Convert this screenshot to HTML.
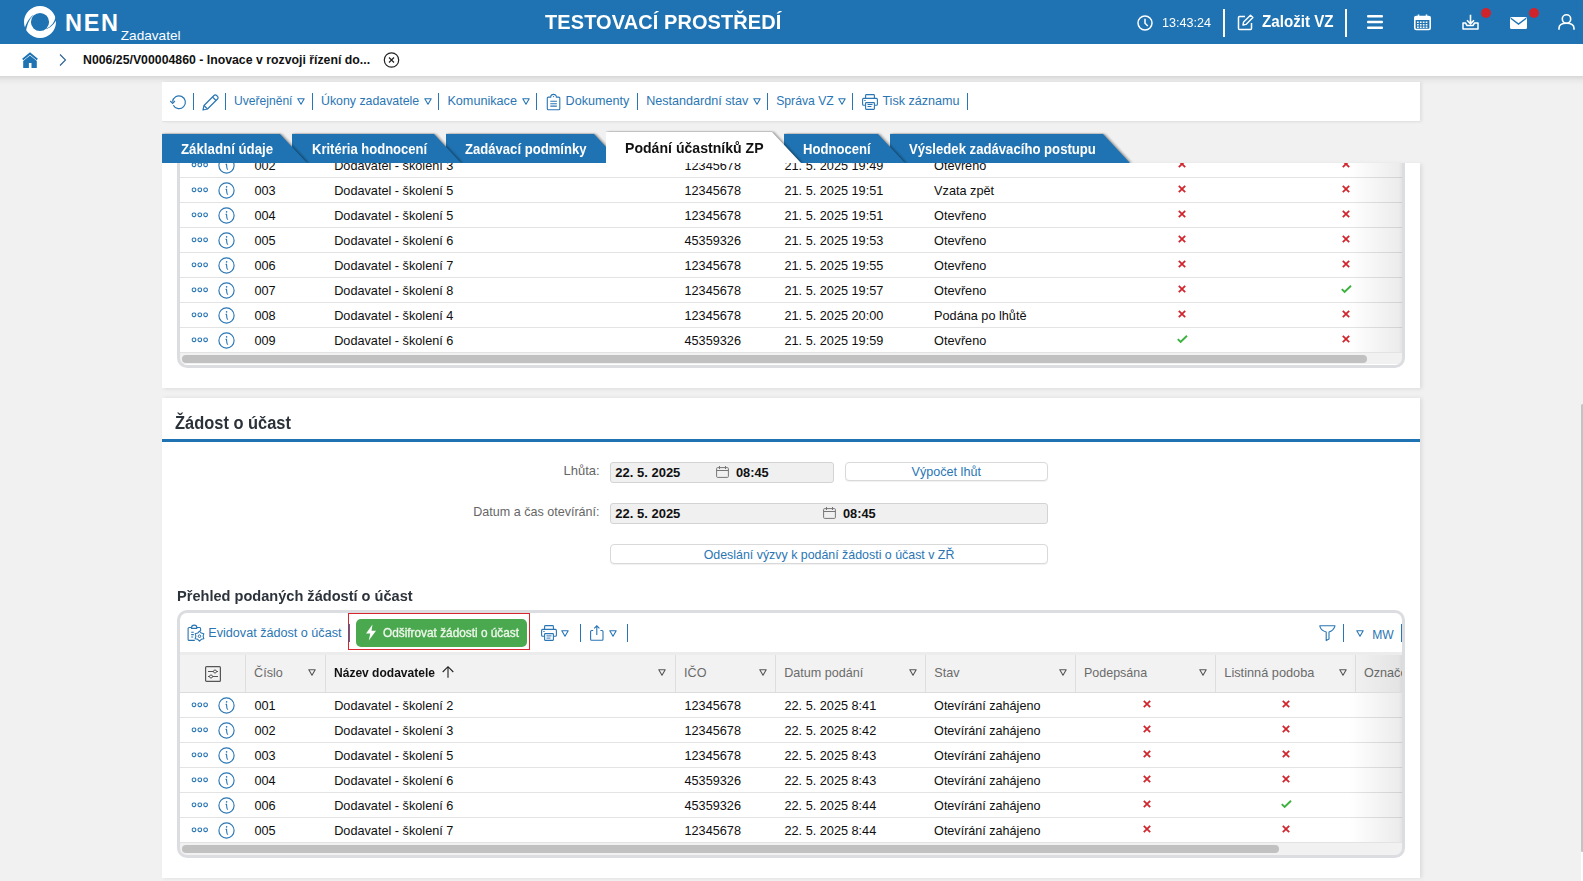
<!DOCTYPE html>
<html><head><meta charset="utf-8"><title>NEN</title><style>*{box-sizing:border-box}
html,body{margin:0;padding:0}
body{width:1583px;height:881px;overflow:hidden;background:#f1f1f1;position:relative;font-family:"Liberation Sans",sans-serif;color:#222}
.a{position:absolute}
.t{position:absolute;white-space:nowrap;line-height:1}
svg{position:absolute;overflow:visible}
#hdr{left:0;top:0;width:1583px;height:44px;background:#1f73b2}
#bc{left:0;top:44px;width:1583px;height:32px;background:#fff}
.panel{background:#fff;box-shadow:1px 1px 3px rgba(0,0,0,.10)}
.lnk{color:#2a76b4}
.sep{position:absolute;width:1px;background:#2a76b4}
.tab{position:absolute;top:134px;height:29px;background:#1f73b2}
.tabt{color:#fff;font-weight:bold}
.rl{position:absolute;height:1px;background:#e1e1e1}
.cell{position:absolute;white-space:nowrap;line-height:1;font-size:12.7px;color:#1a1a1a}
</style></head><body>
<div id="hdr" class="a"></div>
<svg style="left:23px;top:5px" width="34" height="34" viewBox="0 0 34 34"><circle cx="17" cy="17" r="12.55" fill="none" stroke="#fff" stroke-width="6.9"/><path d="M3.16 25.06 C4.62 18.80 6.68 13.41 10.34 10.61 L10.06 10.19 C6.12 12.59 3.18 18.40 1.24 24.54Z" fill="#1f73b2"/><path d="M32.62 11.39 C31.67 17.04 28.21 21.34 23.11 23.67 L23.29 24.13 C28.59 22.26 33.13 17.36 34.58 11.81Z" fill="#1f73b2"/></svg>
<div class="t" style="left:65.00px;top:11.61px;font-size:23.5px;font-weight:bold;color:#fff;letter-spacing:1.7px">NEN</div>
<div class="t" style="left:120.80px;top:28.79px;font-size:13.6px;color:#fff">Zadavatel</div>
<div class="t" style="left:545.00px;top:11.86px;font-size:20.6px;font-weight:bold;color:#fff;letter-spacing:0.1px;transform:scaleX(0.97);transform-origin:0 0">TESTOVACÍ PROSTŘEDÍ</div>
<svg style="left:1137px;top:15px" width="16" height="16" viewBox="0 0 16 16"><circle cx="8" cy="8" r="7" fill="none" stroke="#fff" stroke-width="1.5"/><path d="M8 3.8V8.3L10.8 11" fill="none" stroke="#fff" stroke-width="1.5"/></svg>
<div class="t" style="left:1162.00px;top:16.06px;font-size:13.4px;color:#fff;transform:scaleX(0.94);transform-origin:0 0">13:43:24</div>
<div class="a" style="left:1223px;top:9px;width:2px;height:28px;background:#fff"></div>
<svg style="left:1237px;top:14px" width="17" height="16" viewBox="0 0 17 16"><path d="M8 2.5H2.5a1 1 0 0 0-1 1V14.5a1 1 0 0 0 1 1H13.5a1 1 0 0 0 1-1V9" fill="none" stroke="#fff" stroke-width="1.5"/><path d="M6 11l.6-3L13.5 1.2l2.4 2.4L9 10.4z" fill="none" stroke="#fff" stroke-width="1.4" stroke-linejoin="round"/></svg>
<div class="t" style="left:1261.70px;top:13.12px;font-size:16.4px;font-weight:bold;color:#fff;transform:scaleX(0.925);transform-origin:0 0">Založit VZ</div>
<div class="a" style="left:1345px;top:9px;width:2px;height:28px;background:#fff"></div>
<svg style="left:1367px;top:15px" width="16" height="14" viewBox="0 0 16 14"><rect x="0" y="0" width="16" height="2.4" rx="1" fill="#fff"/><rect x="0" y="5.8" width="16" height="2.4" rx="1" fill="#fff"/><rect x="0" y="11.6" width="16" height="2.4" rx="1" fill="#fff"/></svg>
<svg style="left:1414px;top:14px" width="17" height="16" viewBox="0 0 17 16"><rect x="0.8" y="2.5" width="15.4" height="13" rx="1.5" fill="none" stroke="#fff" stroke-width="1.6"/><rect x="0.8" y="2.5" width="15.4" height="3.5" fill="#fff"/><path d="M4.5 0.5v3M12.5 0.5v3" stroke="#fff" stroke-width="1.6"/><rect x="3.0" y="7.5" width="1.7" height="1.5" fill="#fff"/><rect x="5.9" y="7.5" width="1.7" height="1.5" fill="#fff"/><rect x="8.8" y="7.5" width="1.7" height="1.5" fill="#fff"/><rect x="11.7" y="7.5" width="1.7" height="1.5" fill="#fff"/><rect x="3.0" y="10.0" width="1.7" height="1.5" fill="#fff"/><rect x="5.9" y="10.0" width="1.7" height="1.5" fill="#fff"/><rect x="8.8" y="10.0" width="1.7" height="1.5" fill="#fff"/><rect x="11.7" y="10.0" width="1.7" height="1.5" fill="#fff"/><rect x="3.0" y="12.5" width="1.7" height="1.5" fill="#fff"/><rect x="5.9" y="12.5" width="1.7" height="1.5" fill="#fff"/><rect x="8.8" y="12.5" width="1.7" height="1.5" fill="#fff"/><rect x="11.7" y="12.5" width="1.7" height="1.5" fill="#fff"/></svg>
<svg style="left:1462px;top:14px" width="17" height="16" viewBox="0 0 17 16"><path d="M8.5 0.8V9.5M5 6.3l3.5 3.5 3.5-3.5" fill="none" stroke="#fff" stroke-width="1.6"/><path d="M1 9v6h15V9h-3.5l-1.5 2.5H5L3.5 9z" fill="none" stroke="#fff" stroke-width="1.5" stroke-linejoin="round"/></svg>
<div class="a" style="left:1481px;top:8px;width:10px;height:10px;background:#d0242c;border-radius:50%"></div>
<svg style="left:1510px;top:17px" width="17" height="12" viewBox="0 0 17 12"><rect x="0" y="0" width="17" height="12" rx="1.5" fill="#fff"/><path d="M0.8 1.2L8.5 7 16.2 1.2" fill="none" stroke="#1f73b2" stroke-width="1.4"/></svg>
<div class="a" style="left:1529px;top:8px;width:10px;height:10px;background:#d0242c;border-radius:50%"></div>
<svg style="left:1558px;top:14px" width="17" height="16" viewBox="0 0 17 16"><circle cx="8.5" cy="5" r="4.2" fill="none" stroke="#fff" stroke-width="1.6"/><path d="M1 15.8v-1.5c0-3 2.5-5 7.5-5s7.5 2 7.5 5v1.5" fill="none" stroke="#fff" stroke-width="1.6"/></svg>
<div id="bc" class="a"></div>
<div class="a" style="left:0px;top:76px;width:1583px;height:9px;background:linear-gradient(rgba(0,0,0,.105),rgba(0,0,0,.03) 50%,rgba(0,0,0,0))"></div>
<svg style="left:22px;top:52px" width="16" height="16" viewBox="0 0 16 16"><path d="M0.7 7.4L8 1.4 15.3 7.4" fill="none" stroke="#1f73b2" stroke-width="1.9"/><path d="M1.2 9L8 3.5 14.8 9V15.9H9.5V11H6.9V15.9H1.2z" fill="#1f73b2"/></svg>
<svg style="left:59px;top:54px" width="8" height="12" viewBox="0 0 8 12"><path d="M1 0.5L6.5 6 1 11.5" fill="none" stroke="#2a5f8f" stroke-width="1.1"/></svg>
<div class="t" style="left:83.00px;top:53.99px;font-size:12.3px;font-weight:bold;color:#111">N006/25/V00004860 - Inovace v rozvoji řízení do...</div>
<svg style="left:383px;top:52px" width="17" height="17" viewBox="0 0 17 17"><circle cx="8.5" cy="8" r="7.2" fill="none" stroke="#222" stroke-width="1.2"/><path d="M6 5.5l5 5M11 5.5l-5 5" stroke="#222" stroke-width="1.2"/></svg>
<div class="a" style="left:162px;top:82px;width:1258px;height:40px;background:#fff;border-bottom:1px solid #e2e2e2;box-shadow:2px 0 3px rgba(0,0,0,.07)"></div>
<svg style="left:170px;top:94px" width="17" height="17" viewBox="0 0 17 17"><path d="M2.6 7.8A6.4 6.4 0 1 1 3.3 11.2" fill="none" stroke="#2a76b4" stroke-width="1.2"/><path d="M0.3 7.0L2.6 9.4 4.9 7.0" fill="none" stroke="#2a76b4" stroke-width="1.2"/></svg>
<div class="a" style="left:193px;top:93px;width:1px;height:17px;background:#2a76b4"></div>
<svg style="left:202px;top:94px" width="17" height="17" viewBox="0 0 17 17"><path d="M1 16l1-4.5L12 1.5a1.8 1.8 0 0 1 2.6 0l.9.9a1.8 1.8 0 0 1 0 2.6L5.5 15z" fill="none" stroke="#2a76b4" stroke-width="1.2" stroke-linejoin="round"/><path d="M2 11.5l3.5 3.5M10.5 3l3.5 3.5" stroke="#2a76b4" stroke-width="1.1"/></svg>
<div class="a" style="left:225px;top:93px;width:1px;height:17px;background:#2a76b4"></div>
<div class="t" style="left:234.00px;top:94.96px;font-size:12.1px;color:#2a76b4">Uveřejnění</div>
<svg style="left:297px;top:98px" width="8" height="7" viewBox="0 0 8 7"><path d="M0.8 0.8H7.2L4 6.2z" fill="none" stroke="#2a76b4" stroke-width="1.1" stroke-linejoin="round"/></svg>
<div class="a" style="left:312px;top:93px;width:1px;height:17px;background:#2a76b4"></div>
<div class="t" style="left:321.00px;top:94.75px;font-size:12.35px;color:#2a76b4">Úkony zadavatele</div>
<svg style="left:424px;top:98px" width="8" height="7" viewBox="0 0 8 7"><path d="M0.8 0.8H7.2L4 6.2z" fill="none" stroke="#2a76b4" stroke-width="1.1" stroke-linejoin="round"/></svg>
<div class="a" style="left:438px;top:93px;width:1px;height:17px;background:#2a76b4"></div>
<div class="t" style="left:447.40px;top:94.99px;font-size:12.65px;color:#2a76b4">Komunikace</div>
<svg style="left:522px;top:98px" width="8" height="7" viewBox="0 0 8 7"><path d="M0.8 0.8H7.2L4 6.2z" fill="none" stroke="#2a76b4" stroke-width="1.1" stroke-linejoin="round"/></svg>
<div class="a" style="left:536px;top:93px;width:1px;height:17px;background:#2a76b4"></div>
<svg style="left:546px;top:94px" width="15" height="16" viewBox="0 0 15 16"><path d="M4.8 3.1H2.3a1 1 0 0 0-1 1V14.7a1 1 0 0 0 1 1H12.8a1 1 0 0 0 1-1V4.1a1 1 0 0 0-1-1H10.3" fill="none" stroke="#2a76b4" stroke-width="1.1"/><path d="M4.8 3.6V2.6a2.75 2.2 0 0 1 5.5 0V3.6" fill="none" stroke="#2a76b4" stroke-width="1.1"/><circle cx="7.55" cy="2.6" r=".6" fill="#2a76b4"/><path d="M4.3 7.3h6.6M4.3 9.7h6.6M4.3 12.1h6.6" stroke="#2a76b4" stroke-width="1.05"/></svg>
<div class="t" style="left:565.60px;top:94.53px;font-size:12.6px;color:#2a76b4">Dokumenty</div>
<div class="a" style="left:637px;top:93px;width:1px;height:17px;background:#2a76b4"></div>
<div class="t" style="left:646.20px;top:94.53px;font-size:12.6px;color:#2a76b4">Nestandardní stav</div>
<svg style="left:753px;top:98px" width="8" height="7" viewBox="0 0 8 7"><path d="M0.8 0.8H7.2L4 6.2z" fill="none" stroke="#2a76b4" stroke-width="1.1" stroke-linejoin="round"/></svg>
<div class="a" style="left:767px;top:93px;width:1px;height:17px;background:#2a76b4"></div>
<div class="t" style="left:776.20px;top:94.87px;font-size:12.2px;color:#2a76b4">Správa VZ</div>
<svg style="left:838px;top:98px" width="8" height="7" viewBox="0 0 8 7"><path d="M0.8 0.8H7.2L4 6.2z" fill="none" stroke="#2a76b4" stroke-width="1.1" stroke-linejoin="round"/></svg>
<div class="a" style="left:852px;top:93px;width:1px;height:17px;background:#2a76b4"></div>
<svg style="left:861.6px;top:94px" width="16" height="16" viewBox="0 0 16 16"><path d="M3.6 4.4V1.4a.8.8 0 0 1 .8-.8h7.2a.8.8 0 0 1 .8.8v3" fill="none" stroke="#2a76b4" stroke-width="1.1"/><path d="M3.4 11.2H1.6a1 1 0 0 1-1-1V5.4a1 1 0 0 1 1-1h12.8a1 1 0 0 1 1 1v4.8a1 1 0 0 1-1 1h-1.8" fill="none" stroke="#2a76b4" stroke-width="1.1"/><rect x="3.6" y="8.6" width="8.8" height="6.8" rx=".6" fill="none" stroke="#2a76b4" stroke-width="1.1"/><path d="M5.5 10.5h5M5.5 12.5h4M2.3 6.5h1.3" stroke="#2a76b4" stroke-width="1"/></svg>
<div class="t" style="left:882.40px;top:94.53px;font-size:12.6px;color:#2a76b4">Tisk záznamu</div>
<div class="a" style="left:967px;top:93px;width:1px;height:17px;background:#2a76b4"></div>
<div class="a" style="left:162px;top:163px;width:1258px;height:225px;background:#fff;box-shadow:2px 1px 4px rgba(0,0,0,.09)"></div>
<div class="a" style="left:0;top:0;width:1583px;height:881px;clip-path:inset(163px 0 0 0)">
<svg style="left:191px;top:162px" width="18" height="6" viewBox="0 0 18 6"><rect x="1.2" y="1.0" width="3.6" height="3.6" rx="1.5" fill="none" stroke="#2a76b4" stroke-width="1.1"/><rect x="7.0" y="1.0" width="3.6" height="3.6" rx="1.5" fill="none" stroke="#2a76b4" stroke-width="1.1"/><rect x="12.8" y="1.0" width="3.6" height="3.6" rx="1.5" fill="none" stroke="#2a76b4" stroke-width="1.1"/></svg>
<svg style="left:217.5px;top:156.7px" width="17" height="17" viewBox="0 0 17 17"><circle cx="8.5" cy="8.5" r="7.6" fill="none" stroke="#2a76b4" stroke-width="1.15"/><circle cx="8.6" cy="4.9" r="0.8" fill="#2a76b4"/><path d="M7.6 7.4h.9l.4 3.6c.1 .9 .5 1.3 1.2 1.5" fill="none" stroke="#2a76b4" stroke-width="1.1"/></svg>
<div class="t" style="left:254.50px;top:160.05px;font-size:12.7px;color:#0e0e0e">002</div>
<div class="t" style="left:334.20px;top:160.05px;font-size:12.7px;color:#0e0e0e">Dodavatel - školení 3</div>
<div class="t" style="left:684.50px;top:160.05px;font-size:12.7px;color:#0e0e0e">12345678</div>
<div class="t" style="left:784.50px;top:160.05px;font-size:12.7px;color:#0e0e0e">21. 5. 2025 19:49</div>
<div class="t" style="left:934.10px;top:160.05px;font-size:12.7px;color:#0e0e0e">Otevřeno</div>
<svg style="left:1177.5px;top:159.5px" width="8" height="8" viewBox="0 0 8 8"><path d="M0.8 0.8L7.2 7.2M7.2 0.8L0.8 7.2" stroke="#d0262d" stroke-width="1.8"/></svg>
<svg style="left:1342.3px;top:159.5px" width="8" height="8" viewBox="0 0 8 8"><path d="M0.8 0.8L7.2 7.2M7.2 0.8L0.8 7.2" stroke="#d0262d" stroke-width="1.8"/></svg>
<div class="a" style="left:180px;top:177px;width:1222px;height:1px;background:#e3e3e3"></div>
<svg style="left:191px;top:187px" width="18" height="6" viewBox="0 0 18 6"><rect x="1.2" y="1.0" width="3.6" height="3.6" rx="1.5" fill="none" stroke="#2a76b4" stroke-width="1.1"/><rect x="7.0" y="1.0" width="3.6" height="3.6" rx="1.5" fill="none" stroke="#2a76b4" stroke-width="1.1"/><rect x="12.8" y="1.0" width="3.6" height="3.6" rx="1.5" fill="none" stroke="#2a76b4" stroke-width="1.1"/></svg>
<svg style="left:217.5px;top:181.7px" width="17" height="17" viewBox="0 0 17 17"><circle cx="8.5" cy="8.5" r="7.6" fill="none" stroke="#2a76b4" stroke-width="1.15"/><circle cx="8.6" cy="4.9" r="0.8" fill="#2a76b4"/><path d="M7.6 7.4h.9l.4 3.6c.1 .9 .5 1.3 1.2 1.5" fill="none" stroke="#2a76b4" stroke-width="1.1"/></svg>
<div class="t" style="left:254.50px;top:185.05px;font-size:12.7px;color:#0e0e0e">003</div>
<div class="t" style="left:334.20px;top:185.05px;font-size:12.7px;color:#0e0e0e">Dodavatel - školení 5</div>
<div class="t" style="left:684.50px;top:185.05px;font-size:12.7px;color:#0e0e0e">12345678</div>
<div class="t" style="left:784.50px;top:185.05px;font-size:12.7px;color:#0e0e0e">21. 5. 2025 19:51</div>
<div class="t" style="left:934.10px;top:185.05px;font-size:12.7px;color:#0e0e0e">Vzata zpět</div>
<svg style="left:1177.5px;top:184.5px" width="8" height="8" viewBox="0 0 8 8"><path d="M0.8 0.8L7.2 7.2M7.2 0.8L0.8 7.2" stroke="#d0262d" stroke-width="1.8"/></svg>
<svg style="left:1342.3px;top:184.5px" width="8" height="8" viewBox="0 0 8 8"><path d="M0.8 0.8L7.2 7.2M7.2 0.8L0.8 7.2" stroke="#d0262d" stroke-width="1.8"/></svg>
<div class="a" style="left:180px;top:202px;width:1222px;height:1px;background:#e3e3e3"></div>
<svg style="left:191px;top:212px" width="18" height="6" viewBox="0 0 18 6"><rect x="1.2" y="1.0" width="3.6" height="3.6" rx="1.5" fill="none" stroke="#2a76b4" stroke-width="1.1"/><rect x="7.0" y="1.0" width="3.6" height="3.6" rx="1.5" fill="none" stroke="#2a76b4" stroke-width="1.1"/><rect x="12.8" y="1.0" width="3.6" height="3.6" rx="1.5" fill="none" stroke="#2a76b4" stroke-width="1.1"/></svg>
<svg style="left:217.5px;top:206.7px" width="17" height="17" viewBox="0 0 17 17"><circle cx="8.5" cy="8.5" r="7.6" fill="none" stroke="#2a76b4" stroke-width="1.15"/><circle cx="8.6" cy="4.9" r="0.8" fill="#2a76b4"/><path d="M7.6 7.4h.9l.4 3.6c.1 .9 .5 1.3 1.2 1.5" fill="none" stroke="#2a76b4" stroke-width="1.1"/></svg>
<div class="t" style="left:254.50px;top:210.05px;font-size:12.7px;color:#0e0e0e">004</div>
<div class="t" style="left:334.20px;top:210.05px;font-size:12.7px;color:#0e0e0e">Dodavatel - školení 5</div>
<div class="t" style="left:684.50px;top:210.05px;font-size:12.7px;color:#0e0e0e">12345678</div>
<div class="t" style="left:784.50px;top:210.05px;font-size:12.7px;color:#0e0e0e">21. 5. 2025 19:51</div>
<div class="t" style="left:934.10px;top:210.05px;font-size:12.7px;color:#0e0e0e">Otevřeno</div>
<svg style="left:1177.5px;top:209.5px" width="8" height="8" viewBox="0 0 8 8"><path d="M0.8 0.8L7.2 7.2M7.2 0.8L0.8 7.2" stroke="#d0262d" stroke-width="1.8"/></svg>
<svg style="left:1342.3px;top:209.5px" width="8" height="8" viewBox="0 0 8 8"><path d="M0.8 0.8L7.2 7.2M7.2 0.8L0.8 7.2" stroke="#d0262d" stroke-width="1.8"/></svg>
<div class="a" style="left:180px;top:227px;width:1222px;height:1px;background:#e3e3e3"></div>
<svg style="left:191px;top:237px" width="18" height="6" viewBox="0 0 18 6"><rect x="1.2" y="1.0" width="3.6" height="3.6" rx="1.5" fill="none" stroke="#2a76b4" stroke-width="1.1"/><rect x="7.0" y="1.0" width="3.6" height="3.6" rx="1.5" fill="none" stroke="#2a76b4" stroke-width="1.1"/><rect x="12.8" y="1.0" width="3.6" height="3.6" rx="1.5" fill="none" stroke="#2a76b4" stroke-width="1.1"/></svg>
<svg style="left:217.5px;top:231.7px" width="17" height="17" viewBox="0 0 17 17"><circle cx="8.5" cy="8.5" r="7.6" fill="none" stroke="#2a76b4" stroke-width="1.15"/><circle cx="8.6" cy="4.9" r="0.8" fill="#2a76b4"/><path d="M7.6 7.4h.9l.4 3.6c.1 .9 .5 1.3 1.2 1.5" fill="none" stroke="#2a76b4" stroke-width="1.1"/></svg>
<div class="t" style="left:254.50px;top:235.05px;font-size:12.7px;color:#0e0e0e">005</div>
<div class="t" style="left:334.20px;top:235.05px;font-size:12.7px;color:#0e0e0e">Dodavatel - školení 6</div>
<div class="t" style="left:684.50px;top:235.05px;font-size:12.7px;color:#0e0e0e">45359326</div>
<div class="t" style="left:784.50px;top:235.05px;font-size:12.7px;color:#0e0e0e">21. 5. 2025 19:53</div>
<div class="t" style="left:934.10px;top:235.05px;font-size:12.7px;color:#0e0e0e">Otevřeno</div>
<svg style="left:1177.5px;top:234.5px" width="8" height="8" viewBox="0 0 8 8"><path d="M0.8 0.8L7.2 7.2M7.2 0.8L0.8 7.2" stroke="#d0262d" stroke-width="1.8"/></svg>
<svg style="left:1342.3px;top:234.5px" width="8" height="8" viewBox="0 0 8 8"><path d="M0.8 0.8L7.2 7.2M7.2 0.8L0.8 7.2" stroke="#d0262d" stroke-width="1.8"/></svg>
<div class="a" style="left:180px;top:252px;width:1222px;height:1px;background:#e3e3e3"></div>
<svg style="left:191px;top:262px" width="18" height="6" viewBox="0 0 18 6"><rect x="1.2" y="1.0" width="3.6" height="3.6" rx="1.5" fill="none" stroke="#2a76b4" stroke-width="1.1"/><rect x="7.0" y="1.0" width="3.6" height="3.6" rx="1.5" fill="none" stroke="#2a76b4" stroke-width="1.1"/><rect x="12.8" y="1.0" width="3.6" height="3.6" rx="1.5" fill="none" stroke="#2a76b4" stroke-width="1.1"/></svg>
<svg style="left:217.5px;top:256.7px" width="17" height="17" viewBox="0 0 17 17"><circle cx="8.5" cy="8.5" r="7.6" fill="none" stroke="#2a76b4" stroke-width="1.15"/><circle cx="8.6" cy="4.9" r="0.8" fill="#2a76b4"/><path d="M7.6 7.4h.9l.4 3.6c.1 .9 .5 1.3 1.2 1.5" fill="none" stroke="#2a76b4" stroke-width="1.1"/></svg>
<div class="t" style="left:254.50px;top:260.05px;font-size:12.7px;color:#0e0e0e">006</div>
<div class="t" style="left:334.20px;top:260.05px;font-size:12.7px;color:#0e0e0e">Dodavatel - školení 7</div>
<div class="t" style="left:684.50px;top:260.05px;font-size:12.7px;color:#0e0e0e">12345678</div>
<div class="t" style="left:784.50px;top:260.05px;font-size:12.7px;color:#0e0e0e">21. 5. 2025 19:55</div>
<div class="t" style="left:934.10px;top:260.05px;font-size:12.7px;color:#0e0e0e">Otevřeno</div>
<svg style="left:1177.5px;top:259.5px" width="8" height="8" viewBox="0 0 8 8"><path d="M0.8 0.8L7.2 7.2M7.2 0.8L0.8 7.2" stroke="#d0262d" stroke-width="1.8"/></svg>
<svg style="left:1342.3px;top:259.5px" width="8" height="8" viewBox="0 0 8 8"><path d="M0.8 0.8L7.2 7.2M7.2 0.8L0.8 7.2" stroke="#d0262d" stroke-width="1.8"/></svg>
<div class="a" style="left:180px;top:277px;width:1222px;height:1px;background:#e3e3e3"></div>
<svg style="left:191px;top:287px" width="18" height="6" viewBox="0 0 18 6"><rect x="1.2" y="1.0" width="3.6" height="3.6" rx="1.5" fill="none" stroke="#2a76b4" stroke-width="1.1"/><rect x="7.0" y="1.0" width="3.6" height="3.6" rx="1.5" fill="none" stroke="#2a76b4" stroke-width="1.1"/><rect x="12.8" y="1.0" width="3.6" height="3.6" rx="1.5" fill="none" stroke="#2a76b4" stroke-width="1.1"/></svg>
<svg style="left:217.5px;top:281.7px" width="17" height="17" viewBox="0 0 17 17"><circle cx="8.5" cy="8.5" r="7.6" fill="none" stroke="#2a76b4" stroke-width="1.15"/><circle cx="8.6" cy="4.9" r="0.8" fill="#2a76b4"/><path d="M7.6 7.4h.9l.4 3.6c.1 .9 .5 1.3 1.2 1.5" fill="none" stroke="#2a76b4" stroke-width="1.1"/></svg>
<div class="t" style="left:254.50px;top:285.05px;font-size:12.7px;color:#0e0e0e">007</div>
<div class="t" style="left:334.20px;top:285.05px;font-size:12.7px;color:#0e0e0e">Dodavatel - školení 8</div>
<div class="t" style="left:684.50px;top:285.05px;font-size:12.7px;color:#0e0e0e">12345678</div>
<div class="t" style="left:784.50px;top:285.05px;font-size:12.7px;color:#0e0e0e">21. 5. 2025 19:57</div>
<div class="t" style="left:934.10px;top:285.05px;font-size:12.7px;color:#0e0e0e">Otevřeno</div>
<svg style="left:1177.5px;top:284.5px" width="8" height="8" viewBox="0 0 8 8"><path d="M0.8 0.8L7.2 7.2M7.2 0.8L0.8 7.2" stroke="#d0262d" stroke-width="1.8"/></svg>
<svg style="left:1341.3px;top:285px" width="11" height="8" viewBox="0 0 11 8"><path d="M0.8 4.2L3.6 7 10 0.8" fill="none" stroke="#3bb23d" stroke-width="1.9"/></svg>
<div class="a" style="left:180px;top:302px;width:1222px;height:1px;background:#e3e3e3"></div>
<svg style="left:191px;top:312px" width="18" height="6" viewBox="0 0 18 6"><rect x="1.2" y="1.0" width="3.6" height="3.6" rx="1.5" fill="none" stroke="#2a76b4" stroke-width="1.1"/><rect x="7.0" y="1.0" width="3.6" height="3.6" rx="1.5" fill="none" stroke="#2a76b4" stroke-width="1.1"/><rect x="12.8" y="1.0" width="3.6" height="3.6" rx="1.5" fill="none" stroke="#2a76b4" stroke-width="1.1"/></svg>
<svg style="left:217.5px;top:306.7px" width="17" height="17" viewBox="0 0 17 17"><circle cx="8.5" cy="8.5" r="7.6" fill="none" stroke="#2a76b4" stroke-width="1.15"/><circle cx="8.6" cy="4.9" r="0.8" fill="#2a76b4"/><path d="M7.6 7.4h.9l.4 3.6c.1 .9 .5 1.3 1.2 1.5" fill="none" stroke="#2a76b4" stroke-width="1.1"/></svg>
<div class="t" style="left:254.50px;top:310.05px;font-size:12.7px;color:#0e0e0e">008</div>
<div class="t" style="left:334.20px;top:310.05px;font-size:12.7px;color:#0e0e0e">Dodavatel - školení 4</div>
<div class="t" style="left:684.50px;top:310.05px;font-size:12.7px;color:#0e0e0e">12345678</div>
<div class="t" style="left:784.50px;top:310.05px;font-size:12.7px;color:#0e0e0e">21. 5. 2025 20:00</div>
<div class="t" style="left:934.10px;top:310.05px;font-size:12.7px;color:#0e0e0e">Podána po lhůtě</div>
<svg style="left:1177.5px;top:309.5px" width="8" height="8" viewBox="0 0 8 8"><path d="M0.8 0.8L7.2 7.2M7.2 0.8L0.8 7.2" stroke="#d0262d" stroke-width="1.8"/></svg>
<svg style="left:1342.3px;top:309.5px" width="8" height="8" viewBox="0 0 8 8"><path d="M0.8 0.8L7.2 7.2M7.2 0.8L0.8 7.2" stroke="#d0262d" stroke-width="1.8"/></svg>
<div class="a" style="left:180px;top:327px;width:1222px;height:1px;background:#e3e3e3"></div>
<svg style="left:191px;top:337px" width="18" height="6" viewBox="0 0 18 6"><rect x="1.2" y="1.0" width="3.6" height="3.6" rx="1.5" fill="none" stroke="#2a76b4" stroke-width="1.1"/><rect x="7.0" y="1.0" width="3.6" height="3.6" rx="1.5" fill="none" stroke="#2a76b4" stroke-width="1.1"/><rect x="12.8" y="1.0" width="3.6" height="3.6" rx="1.5" fill="none" stroke="#2a76b4" stroke-width="1.1"/></svg>
<svg style="left:217.5px;top:331.7px" width="17" height="17" viewBox="0 0 17 17"><circle cx="8.5" cy="8.5" r="7.6" fill="none" stroke="#2a76b4" stroke-width="1.15"/><circle cx="8.6" cy="4.9" r="0.8" fill="#2a76b4"/><path d="M7.6 7.4h.9l.4 3.6c.1 .9 .5 1.3 1.2 1.5" fill="none" stroke="#2a76b4" stroke-width="1.1"/></svg>
<div class="t" style="left:254.50px;top:335.05px;font-size:12.7px;color:#0e0e0e">009</div>
<div class="t" style="left:334.20px;top:335.05px;font-size:12.7px;color:#0e0e0e">Dodavatel - školení 6</div>
<div class="t" style="left:684.50px;top:335.05px;font-size:12.7px;color:#0e0e0e">45359326</div>
<div class="t" style="left:784.50px;top:335.05px;font-size:12.7px;color:#0e0e0e">21. 5. 2025 19:59</div>
<div class="t" style="left:934.10px;top:335.05px;font-size:12.7px;color:#0e0e0e">Otevřeno</div>
<svg style="left:1176.5px;top:335px" width="11" height="8" viewBox="0 0 11 8"><path d="M0.8 4.2L3.6 7 10 0.8" fill="none" stroke="#3bb23d" stroke-width="1.9"/></svg>
<svg style="left:1342.3px;top:334.5px" width="8" height="8" viewBox="0 0 8 8"><path d="M0.8 0.8L7.2 7.2M7.2 0.8L0.8 7.2" stroke="#d0262d" stroke-width="1.8"/></svg>
<div class="a" style="left:180px;top:352px;width:1222px;height:1px;background:#e3e3e3"></div>
</div>
<div class="a" style="left:1349px;top:163px;width:53px;height:189px;background:linear-gradient(to right,rgba(0,0,0,0),rgba(0,0,0,.075) 94%,rgba(0,0,0,.11))"></div>
<div class="a" style="left:180px;top:353px;width:1222px;height:11px;background:#f1f1f1"></div>
<div class="a" style="left:182px;top:355px;width:1185px;height:8px;background:#c1c1c1;border-radius:4px"></div>
<div class="a" style="left:177px;top:163px;width:1228px;height:205px;border:3px solid #dcdde0;border-top:0;border-radius:0 0 10px 10px"></div>
<div class="a" style="left:446px;top:134px;width:181px;height:29px;filter:drop-shadow(2px 0px 1.2px rgba(0,0,0,.3)) drop-shadow(0 -1px 0.6px rgba(0,0,0,.10));clip-path:inset(-6px -10px 0 -6px)"><svg style="left:0;top:0" width="175" height="29"><polygon points="0,0 148,0 175,29 0,29" fill="#1f73b2"/></svg></div>
<div class="t" style="left:465.20px;top:142.02px;font-size:14.15px;font-weight:bold;color:#fff;transform:scaleX(0.9259);transform-origin:0 0">Zadávací podmínky</div>
<div class="a" style="left:292px;top:134px;width:175px;height:29px;filter:drop-shadow(2px 0px 1.2px rgba(0,0,0,.3)) drop-shadow(0 -1px 0.6px rgba(0,0,0,.10));clip-path:inset(-6px -10px 0 -6px)"><svg style="left:0;top:0" width="169" height="29"><polygon points="0,0 142,0 169,29 0,29" fill="#1f73b2"/></svg></div>
<div class="t" style="left:311.70px;top:142.07px;font-size:14.09px;font-weight:bold;color:#fff;transform:scaleX(0.9259);transform-origin:0 0">Kritéria hodnocení</div>
<div class="a" style="left:162px;top:134px;width:151px;height:29px;filter:drop-shadow(2px 0px 1.2px rgba(0,0,0,.3)) drop-shadow(0 -1px 0.6px rgba(0,0,0,.10));clip-path:inset(-6px -10px 0 -6px)"><svg style="left:0;top:0" width="145" height="29"><polygon points="0,0 118,0 145,29 0,29" fill="#1f73b2"/></svg></div>
<div class="t" style="left:181.00px;top:141.87px;font-size:14.33px;font-weight:bold;color:#fff;transform:scaleX(0.9259);transform-origin:0 0">Základní údaje</div>
<div class="a" style="left:890px;top:134px;width:246px;height:29px;filter:drop-shadow(2px 0px 1.2px rgba(0,0,0,.3)) drop-shadow(0 -1px 0.6px rgba(0,0,0,.10));clip-path:inset(-6px -10px 0 -6px)"><svg style="left:0;top:0" width="240" height="29"><polygon points="0,0 213,0 240,29 0,29" fill="#1f73b2"/></svg></div>
<div class="t" style="left:909.20px;top:141.99px;font-size:14.19px;font-weight:bold;color:#fff;transform:scaleX(0.9259);transform-origin:0 0">Výsledek zadávacího postupu</div>
<div class="a" style="left:784px;top:134px;width:127px;height:29px;filter:drop-shadow(2px 0px 1.2px rgba(0,0,0,.3)) drop-shadow(0 -1px 0.6px rgba(0,0,0,.10));clip-path:inset(-6px -10px 0 -6px)"><svg style="left:0;top:0" width="121" height="29"><polygon points="0,0 94,0 121,29 0,29" fill="#1f73b2"/></svg></div>
<div class="t" style="left:803.30px;top:142.02px;font-size:14.15px;font-weight:bold;color:#fff;transform:scaleX(0.9259);transform-origin:0 0">Hodnocení</div>
<div class="a" style="left:606px;top:132px;width:201px;height:31px;filter:drop-shadow(2px 0px 1.2px rgba(0,0,0,.3)) drop-shadow(0 -1px 0.6px rgba(0,0,0,.10));clip-path:inset(-6px -10px 0 -6px)"><svg style="left:0;top:0" width="195" height="31"><polygon points="0,0 166,0 195,31 0,31" fill="#fff"/></svg></div>
<div class="t" style="left:625.00px;top:140.31px;font-size:15.23px;font-weight:bold;color:#111;transform:scaleX(0.9259);transform-origin:0 0">Podání účastníků ZP</div>
<div class="a" style="left:162px;top:398px;width:1258px;height:480px;background:#fff;box-shadow:2px 0 4px rgba(0,0,0,.09)"></div>
<div class="t" style="left:174.50px;top:414.09px;font-size:18.8px;font-weight:bold;color:#2b3239;transform:scaleX(0.875);transform-origin:0 0">Žádost o účast</div>
<div class="a" style="left:162px;top:439px;width:1258px;height:3px;background:#1f73b2"></div>
<div class="t" style="left:563.50px;top:464.30px;font-size:13.0px;color:#666">Lhůta:</div>
<div class="t" style="left:473.30px;top:506.17px;font-size:12.56px;color:#666">Datum a čas otevírání:</div>
<div class="a" style="left:610px;top:462px;width:224px;height:21px;background:#f0f0f0;border:1px solid #d3d3d3;border-radius:3px"></div>
<div class="t" style="left:615.30px;top:466.10px;font-size:13.0px;font-weight:bold;color:#111">22. 5. 2025</div>
<svg style="left:716px;top:466px" width="13" height="12" viewBox="0 0 13 12"><rect x="0.6" y="1.6" width="11.8" height="9.8" rx="1" fill="none" stroke="#777" stroke-width="1"/><path d="M0.6 4.5h11.8M3.5 0v3M9.5 0v3" stroke="#777" stroke-width="1"/></svg>
<div class="t" style="left:736.00px;top:466.76px;font-size:12.8px;font-weight:bold;color:#111">08:45</div>
<div class="a" style="left:845px;top:462px;width:203px;height:19px;background:#fff;border:1px solid #d9d9d9;border-radius:4px;box-shadow:0 1px 1px rgba(0,0,0,.06)"></div>
<div class="t" style="left:911.60px;top:466.33px;font-size:12.6px;color:#2a76b4">Výpočet lhůt</div>
<div class="a" style="left:610px;top:503px;width:438px;height:21px;background:#f0f0f0;border:1px solid #d3d3d3;border-radius:3px"></div>
<div class="t" style="left:615.30px;top:507.10px;font-size:13.0px;font-weight:bold;color:#111">22. 5. 2025</div>
<svg style="left:823px;top:507px" width="13" height="12" viewBox="0 0 13 12"><rect x="0.6" y="1.6" width="11.8" height="9.8" rx="1" fill="none" stroke="#777" stroke-width="1"/><path d="M0.6 4.5h11.8M3.5 0v3M9.5 0v3" stroke="#777" stroke-width="1"/></svg>
<div class="t" style="left:843.00px;top:507.76px;font-size:12.8px;font-weight:bold;color:#111">08:45</div>
<div class="a" style="left:610px;top:544px;width:438px;height:20px;background:#fff;border:1px solid #d9d9d9;border-radius:4px;box-shadow:0 1px 1px rgba(0,0,0,.06)"></div>
<div class="t" style="left:703.70px;top:548.50px;font-size:12.4px;color:#2a76b4">Odeslání výzvy k podání žádosti o účast v ZŘ</div>
<div class="t" style="left:177.40px;top:588.08px;font-size:15.5px;font-weight:bold;color:#2c333b;transform:scaleX(0.94);transform-origin:0 0">Přehled podaných žádostí o účast</div>
<svg style="left:187px;top:624px" width="18" height="18" viewBox="0 0 18 18"><path d="M7.8 16.4H2.1a1 1 0 0 1-1-1V4.5a1 1 0 0 1 1-1H4.8M9.6 3.5h3a1 1 0 0 1 1 1V7" fill="none" stroke="#2a76b4" stroke-width="1.1"/><path d="M4.6 4.4V3.4a2.6 2.3 0 0 1 5.2 0V4.4z" fill="none" stroke="#2a76b4" stroke-width="1.1"/><path d="M4.2 8.2h2.6M4.2 10.6h2.6M4.2 13h2" stroke="#2a76b4" stroke-width="1.1"/><path d="M12.50,7.20 L14.30,9.08 L16.83,9.70 L16.10,12.20 L16.83,14.70 L14.30,15.32 L12.50,17.20 L10.70,15.32 L8.17,14.70 L8.90,12.20 L8.17,9.70 L10.70,9.08Z" fill="#fff" stroke="#2a76b4" stroke-width="1.1" stroke-linejoin="round"/><circle cx="12.5" cy="12.2" r="1.3" fill="none" stroke="#2a76b4" stroke-width="1"/></svg>
<div class="t" style="left:208.30px;top:627.12px;font-size:12.62px;color:#2a76b4">Evidovat žádost o účast</div>
<div class="a" style="left:348px;top:613px;width:182px;height:37px;border:1px solid #d8262f"></div>
<div class="a" style="left:349px;top:624px;width:1px;height:18px;background:#2a76b4"></div>
<div class="a" style="left:356px;top:619px;width:171px;height:28px;background:#4aa94e;border-radius:5px"></div>
<svg style="left:365px;top:624px" width="12" height="17" viewBox="0 0 12 17"><path d="M7.5 0.5L1 9.5h4.3L3.8 16.5 11 6.8H6.5z" fill="#fff"/></svg>
<div class="t" style="left:382.70px;top:627.17px;font-size:12.2px;color:#eef6ec;transform:scaleX(0.97);transform-origin:0 0;-webkit-text-stroke:0.35px #eef6ec">Odšifrovat žádosti o účast</div>
<svg style="left:541px;top:625px" width="16" height="16" viewBox="0 0 16 16"><path d="M3.6 4.4V1.4a.8.8 0 0 1 .8-.8h7.2a.8.8 0 0 1 .8.8v3" fill="none" stroke="#2a76b4" stroke-width="1.1"/><path d="M3.4 11.2H1.6a1 1 0 0 1-1-1V5.4a1 1 0 0 1 1-1h12.8a1 1 0 0 1 1 1v4.8a1 1 0 0 1-1 1h-1.8" fill="none" stroke="#2a76b4" stroke-width="1.1"/><rect x="3.6" y="8.6" width="8.8" height="6.8" rx=".6" fill="none" stroke="#2a76b4" stroke-width="1.1"/><path d="M5.5 10.9h5M5.5 13.1h4M2.3 6.5h1.3" stroke="#2a76b4" stroke-width="1"/></svg>
<svg style="left:561px;top:629.5px" width="8" height="7" viewBox="0 0 8 7"><path d="M0.8 0.8H7.2L4 6.2z" fill="none" stroke="#2a76b4" stroke-width="1.1" stroke-linejoin="round"/></svg>
<div class="a" style="left:580px;top:624px;width:1px;height:18px;background:#2a76b4"></div>
<svg style="left:590px;top:625px" width="14" height="16" viewBox="0 0 14 16"><path d="M3.2 5.5H1.6a1 1 0 0 0-1 1v7.8a1 1 0 0 0 1 1h10.4a1 1 0 0 0 1-1V6.5a1 1 0 0 0-1-1h-1.6" fill="none" stroke="#2a76b4" stroke-width="1.1"/><path d="M6.8 10V1M4.2 3.4l2.6-2.6 2.6 2.6" fill="none" stroke="#2a76b4" stroke-width="1.1"/></svg>
<svg style="left:608.5px;top:629.5px" width="8" height="7" viewBox="0 0 8 7"><path d="M0.8 0.8H7.2L4 6.2z" fill="none" stroke="#2a76b4" stroke-width="1.1" stroke-linejoin="round"/></svg>
<div class="a" style="left:627px;top:624px;width:1px;height:18px;background:#2a76b4"></div>
<svg style="left:1319px;top:625px" width="17" height="16" viewBox="0 0 17 16"><path d="M0.8 0.7h15.2l-.4 1.4c-1 2.5-3.5 4.3-5.6 4.9v7l-2.8 1.6V7C5.1 6.4 2 4.6 1.1 2.1z" fill="none" stroke="#2a76b4" stroke-width="1.1" stroke-linejoin="round"/></svg>
<div class="a" style="left:1343px;top:624px;width:1px;height:18px;background:#2a76b4"></div>
<svg style="left:1355.5px;top:629.5px" width="8" height="7" viewBox="0 0 8 7"><path d="M0.8 0.8H7.2L4 6.2z" fill="none" stroke="#2a76b4" stroke-width="1.1" stroke-linejoin="round"/></svg>
<div class="t" style="left:1372.20px;top:628.66px;font-size:12.1px;color:#2a76b4">MW</div>
<div class="a" style="left:1401px;top:624px;width:1px;height:18px;background:#2a76b4"></div>
<div class="a" style="left:180px;top:652px;width:1222px;height:3px;background:#ececec"></div>
<div class="a" style="left:180px;top:655px;width:1222px;height:37px;background:#f2f2f2"></div>
<div class="a" style="left:180px;top:692px;width:1222px;height:1px;background:#dcdcdc"></div>
<div class="a" style="left:245px;top:655px;width:1px;height:37px;background:#dedede"></div>
<div class="a" style="left:325px;top:655px;width:1px;height:37px;background:#dedede"></div>
<div class="a" style="left:675px;top:655px;width:1px;height:37px;background:#dedede"></div>
<div class="a" style="left:775px;top:655px;width:1px;height:37px;background:#dedede"></div>
<div class="a" style="left:925px;top:655px;width:1px;height:37px;background:#dedede"></div>
<div class="a" style="left:1075px;top:655px;width:1px;height:37px;background:#dedede"></div>
<div class="a" style="left:1215px;top:655px;width:1px;height:37px;background:#dedede"></div>
<div class="a" style="left:1355px;top:655px;width:1px;height:37px;background:#dedede"></div>
<svg style="left:205px;top:666px" width="16" height="16" viewBox="0 0 16 16"><rect x="0.6" y="0.6" width="14.8" height="14.8" rx="1" fill="none" stroke="#555" stroke-width="1.2"/><path d="M3 5.5h10M3 10.5h10" stroke="#555" stroke-width="1"/><circle cx="10" cy="5.5" r="1.5" fill="#f2f2f2" stroke="#555"/><circle cx="6" cy="10.5" r="1.5" fill="#f2f2f2" stroke="#555"/></svg>
<div class="t" style="left:254.10px;top:667.03px;font-size:12.6px;color:#6b6b6b">Číslo</div>
<svg style="left:308px;top:669px" width="8" height="7" viewBox="0 0 8 7"><path d="M0.8 0.8H7.2L4 6.2z" fill="none" stroke="#555" stroke-width="1.1" stroke-linejoin="round"/></svg>
<div class="t" style="left:334.20px;top:666.86px;font-size:12.8px;font-weight:bold;color:#111;transform:scaleX(0.94);transform-origin:0 0">Název dodavatele</div>
<svg style="left:441.5px;top:666px" width="12" height="12" viewBox="0 0 12 12"><path d="M6 11.8V0.8M0.7 6l5.3-5.3 5.3 5.3" fill="none" stroke="#222" stroke-width="1.1"/></svg>
<svg style="left:658px;top:669px" width="8" height="7" viewBox="0 0 8 7"><path d="M0.8 0.8H7.2L4 6.2z" fill="none" stroke="#555" stroke-width="1.1" stroke-linejoin="round"/></svg>
<div class="t" style="left:684.10px;top:667.03px;font-size:12.6px;color:#6b6b6b">IČO</div>
<svg style="left:759px;top:669px" width="8" height="7" viewBox="0 0 8 7"><path d="M0.8 0.8H7.2L4 6.2z" fill="none" stroke="#555" stroke-width="1.1" stroke-linejoin="round"/></svg>
<div class="t" style="left:784.20px;top:667.05px;font-size:12.58px;color:#6b6b6b">Datum podání</div>
<svg style="left:909px;top:669px" width="8" height="7" viewBox="0 0 8 7"><path d="M0.8 0.8H7.2L4 6.2z" fill="none" stroke="#555" stroke-width="1.1" stroke-linejoin="round"/></svg>
<div class="t" style="left:934.30px;top:667.03px;font-size:12.6px;color:#6b6b6b">Stav</div>
<svg style="left:1059px;top:669px" width="8" height="7" viewBox="0 0 8 7"><path d="M0.8 0.8H7.2L4 6.2z" fill="none" stroke="#555" stroke-width="1.1" stroke-linejoin="round"/></svg>
<div class="t" style="left:1084.00px;top:667.13px;font-size:12.49px;color:#6b6b6b">Podepsána</div>
<svg style="left:1199px;top:669px" width="8" height="7" viewBox="0 0 8 7"><path d="M0.8 0.8H7.2L4 6.2z" fill="none" stroke="#555" stroke-width="1.1" stroke-linejoin="round"/></svg>
<div class="t" style="left:1224.30px;top:666.91px;font-size:12.75px;color:#6b6b6b">Listinná podoba</div>
<svg style="left:1339px;top:669px" width="8" height="7" viewBox="0 0 8 7"><path d="M0.8 0.8H7.2L4 6.2z" fill="none" stroke="#555" stroke-width="1.1" stroke-linejoin="round"/></svg>
<div class="a" style="left:1355px;top:655px;width:47px;height:37px;overflow:hidden">
<div class="t" style="left:9.00px;top:12.03px;font-size:12.6px;color:#6b6b6b">Označení</div>
</div>
<svg style="left:191px;top:702px" width="18" height="6" viewBox="0 0 18 6"><rect x="1.2" y="1.0" width="3.6" height="3.6" rx="1.5" fill="none" stroke="#2a76b4" stroke-width="1.1"/><rect x="7.0" y="1.0" width="3.6" height="3.6" rx="1.5" fill="none" stroke="#2a76b4" stroke-width="1.1"/><rect x="12.8" y="1.0" width="3.6" height="3.6" rx="1.5" fill="none" stroke="#2a76b4" stroke-width="1.1"/></svg>
<svg style="left:217.5px;top:696.7px" width="17" height="17" viewBox="0 0 17 17"><circle cx="8.5" cy="8.5" r="7.6" fill="none" stroke="#2a76b4" stroke-width="1.15"/><circle cx="8.6" cy="4.9" r="0.8" fill="#2a76b4"/><path d="M7.6 7.4h.9l.4 3.6c.1 .9 .5 1.3 1.2 1.5" fill="none" stroke="#2a76b4" stroke-width="1.1"/></svg>
<div class="t" style="left:254.50px;top:700.05px;font-size:12.7px;color:#0e0e0e">001</div>
<div class="t" style="left:334.20px;top:700.05px;font-size:12.7px;color:#0e0e0e">Dodavatel - školení 2</div>
<div class="t" style="left:684.50px;top:700.05px;font-size:12.7px;color:#0e0e0e">12345678</div>
<div class="t" style="left:784.50px;top:700.05px;font-size:12.7px;color:#0e0e0e">22. 5. 2025 8:41</div>
<div class="t" style="left:934.10px;top:700.15px;font-size:12.58px;color:#0e0e0e">Otevírání zahájeno</div>
<svg style="left:1142.5px;top:699.5px" width="8" height="8" viewBox="0 0 8 8"><path d="M0.8 0.8L7.2 7.2M7.2 0.8L0.8 7.2" stroke="#d0262d" stroke-width="1.8"/></svg>
<svg style="left:1282.3px;top:699.5px" width="8" height="8" viewBox="0 0 8 8"><path d="M0.8 0.8L7.2 7.2M7.2 0.8L0.8 7.2" stroke="#d0262d" stroke-width="1.8"/></svg>
<div class="a" style="left:180px;top:717px;width:1222px;height:1px;background:#e3e3e3"></div>
<svg style="left:191px;top:727px" width="18" height="6" viewBox="0 0 18 6"><rect x="1.2" y="1.0" width="3.6" height="3.6" rx="1.5" fill="none" stroke="#2a76b4" stroke-width="1.1"/><rect x="7.0" y="1.0" width="3.6" height="3.6" rx="1.5" fill="none" stroke="#2a76b4" stroke-width="1.1"/><rect x="12.8" y="1.0" width="3.6" height="3.6" rx="1.5" fill="none" stroke="#2a76b4" stroke-width="1.1"/></svg>
<svg style="left:217.5px;top:721.7px" width="17" height="17" viewBox="0 0 17 17"><circle cx="8.5" cy="8.5" r="7.6" fill="none" stroke="#2a76b4" stroke-width="1.15"/><circle cx="8.6" cy="4.9" r="0.8" fill="#2a76b4"/><path d="M7.6 7.4h.9l.4 3.6c.1 .9 .5 1.3 1.2 1.5" fill="none" stroke="#2a76b4" stroke-width="1.1"/></svg>
<div class="t" style="left:254.50px;top:725.05px;font-size:12.7px;color:#0e0e0e">002</div>
<div class="t" style="left:334.20px;top:725.05px;font-size:12.7px;color:#0e0e0e">Dodavatel - školení 3</div>
<div class="t" style="left:684.50px;top:725.05px;font-size:12.7px;color:#0e0e0e">12345678</div>
<div class="t" style="left:784.50px;top:725.05px;font-size:12.7px;color:#0e0e0e">22. 5. 2025 8:42</div>
<div class="t" style="left:934.10px;top:725.15px;font-size:12.58px;color:#0e0e0e">Otevírání zahájeno</div>
<svg style="left:1142.5px;top:724.5px" width="8" height="8" viewBox="0 0 8 8"><path d="M0.8 0.8L7.2 7.2M7.2 0.8L0.8 7.2" stroke="#d0262d" stroke-width="1.8"/></svg>
<svg style="left:1282.3px;top:724.5px" width="8" height="8" viewBox="0 0 8 8"><path d="M0.8 0.8L7.2 7.2M7.2 0.8L0.8 7.2" stroke="#d0262d" stroke-width="1.8"/></svg>
<div class="a" style="left:180px;top:742px;width:1222px;height:1px;background:#e3e3e3"></div>
<svg style="left:191px;top:752px" width="18" height="6" viewBox="0 0 18 6"><rect x="1.2" y="1.0" width="3.6" height="3.6" rx="1.5" fill="none" stroke="#2a76b4" stroke-width="1.1"/><rect x="7.0" y="1.0" width="3.6" height="3.6" rx="1.5" fill="none" stroke="#2a76b4" stroke-width="1.1"/><rect x="12.8" y="1.0" width="3.6" height="3.6" rx="1.5" fill="none" stroke="#2a76b4" stroke-width="1.1"/></svg>
<svg style="left:217.5px;top:746.7px" width="17" height="17" viewBox="0 0 17 17"><circle cx="8.5" cy="8.5" r="7.6" fill="none" stroke="#2a76b4" stroke-width="1.15"/><circle cx="8.6" cy="4.9" r="0.8" fill="#2a76b4"/><path d="M7.6 7.4h.9l.4 3.6c.1 .9 .5 1.3 1.2 1.5" fill="none" stroke="#2a76b4" stroke-width="1.1"/></svg>
<div class="t" style="left:254.50px;top:750.05px;font-size:12.7px;color:#0e0e0e">003</div>
<div class="t" style="left:334.20px;top:750.05px;font-size:12.7px;color:#0e0e0e">Dodavatel - školení 5</div>
<div class="t" style="left:684.50px;top:750.05px;font-size:12.7px;color:#0e0e0e">12345678</div>
<div class="t" style="left:784.50px;top:750.05px;font-size:12.7px;color:#0e0e0e">22. 5. 2025 8:43</div>
<div class="t" style="left:934.10px;top:750.15px;font-size:12.58px;color:#0e0e0e">Otevírání zahájeno</div>
<svg style="left:1142.5px;top:749.5px" width="8" height="8" viewBox="0 0 8 8"><path d="M0.8 0.8L7.2 7.2M7.2 0.8L0.8 7.2" stroke="#d0262d" stroke-width="1.8"/></svg>
<svg style="left:1282.3px;top:749.5px" width="8" height="8" viewBox="0 0 8 8"><path d="M0.8 0.8L7.2 7.2M7.2 0.8L0.8 7.2" stroke="#d0262d" stroke-width="1.8"/></svg>
<div class="a" style="left:180px;top:767px;width:1222px;height:1px;background:#e3e3e3"></div>
<svg style="left:191px;top:777px" width="18" height="6" viewBox="0 0 18 6"><rect x="1.2" y="1.0" width="3.6" height="3.6" rx="1.5" fill="none" stroke="#2a76b4" stroke-width="1.1"/><rect x="7.0" y="1.0" width="3.6" height="3.6" rx="1.5" fill="none" stroke="#2a76b4" stroke-width="1.1"/><rect x="12.8" y="1.0" width="3.6" height="3.6" rx="1.5" fill="none" stroke="#2a76b4" stroke-width="1.1"/></svg>
<svg style="left:217.5px;top:771.7px" width="17" height="17" viewBox="0 0 17 17"><circle cx="8.5" cy="8.5" r="7.6" fill="none" stroke="#2a76b4" stroke-width="1.15"/><circle cx="8.6" cy="4.9" r="0.8" fill="#2a76b4"/><path d="M7.6 7.4h.9l.4 3.6c.1 .9 .5 1.3 1.2 1.5" fill="none" stroke="#2a76b4" stroke-width="1.1"/></svg>
<div class="t" style="left:254.50px;top:775.05px;font-size:12.7px;color:#0e0e0e">004</div>
<div class="t" style="left:334.20px;top:775.05px;font-size:12.7px;color:#0e0e0e">Dodavatel - školení 6</div>
<div class="t" style="left:684.50px;top:775.05px;font-size:12.7px;color:#0e0e0e">45359326</div>
<div class="t" style="left:784.50px;top:775.05px;font-size:12.7px;color:#0e0e0e">22. 5. 2025 8:43</div>
<div class="t" style="left:934.10px;top:775.15px;font-size:12.58px;color:#0e0e0e">Otevírání zahájeno</div>
<svg style="left:1142.5px;top:774.5px" width="8" height="8" viewBox="0 0 8 8"><path d="M0.8 0.8L7.2 7.2M7.2 0.8L0.8 7.2" stroke="#d0262d" stroke-width="1.8"/></svg>
<svg style="left:1282.3px;top:774.5px" width="8" height="8" viewBox="0 0 8 8"><path d="M0.8 0.8L7.2 7.2M7.2 0.8L0.8 7.2" stroke="#d0262d" stroke-width="1.8"/></svg>
<div class="a" style="left:180px;top:792px;width:1222px;height:1px;background:#e3e3e3"></div>
<svg style="left:191px;top:802px" width="18" height="6" viewBox="0 0 18 6"><rect x="1.2" y="1.0" width="3.6" height="3.6" rx="1.5" fill="none" stroke="#2a76b4" stroke-width="1.1"/><rect x="7.0" y="1.0" width="3.6" height="3.6" rx="1.5" fill="none" stroke="#2a76b4" stroke-width="1.1"/><rect x="12.8" y="1.0" width="3.6" height="3.6" rx="1.5" fill="none" stroke="#2a76b4" stroke-width="1.1"/></svg>
<svg style="left:217.5px;top:796.7px" width="17" height="17" viewBox="0 0 17 17"><circle cx="8.5" cy="8.5" r="7.6" fill="none" stroke="#2a76b4" stroke-width="1.15"/><circle cx="8.6" cy="4.9" r="0.8" fill="#2a76b4"/><path d="M7.6 7.4h.9l.4 3.6c.1 .9 .5 1.3 1.2 1.5" fill="none" stroke="#2a76b4" stroke-width="1.1"/></svg>
<div class="t" style="left:254.50px;top:800.05px;font-size:12.7px;color:#0e0e0e">006</div>
<div class="t" style="left:334.20px;top:800.05px;font-size:12.7px;color:#0e0e0e">Dodavatel - školení 6</div>
<div class="t" style="left:684.50px;top:800.05px;font-size:12.7px;color:#0e0e0e">45359326</div>
<div class="t" style="left:784.50px;top:800.05px;font-size:12.7px;color:#0e0e0e">22. 5. 2025 8:44</div>
<div class="t" style="left:934.10px;top:800.15px;font-size:12.58px;color:#0e0e0e">Otevírání zahájeno</div>
<svg style="left:1142.5px;top:799.5px" width="8" height="8" viewBox="0 0 8 8"><path d="M0.8 0.8L7.2 7.2M7.2 0.8L0.8 7.2" stroke="#d0262d" stroke-width="1.8"/></svg>
<svg style="left:1281.3px;top:800px" width="11" height="8" viewBox="0 0 11 8"><path d="M0.8 4.2L3.6 7 10 0.8" fill="none" stroke="#3bb23d" stroke-width="1.9"/></svg>
<div class="a" style="left:180px;top:817px;width:1222px;height:1px;background:#e3e3e3"></div>
<svg style="left:191px;top:827px" width="18" height="6" viewBox="0 0 18 6"><rect x="1.2" y="1.0" width="3.6" height="3.6" rx="1.5" fill="none" stroke="#2a76b4" stroke-width="1.1"/><rect x="7.0" y="1.0" width="3.6" height="3.6" rx="1.5" fill="none" stroke="#2a76b4" stroke-width="1.1"/><rect x="12.8" y="1.0" width="3.6" height="3.6" rx="1.5" fill="none" stroke="#2a76b4" stroke-width="1.1"/></svg>
<svg style="left:217.5px;top:821.7px" width="17" height="17" viewBox="0 0 17 17"><circle cx="8.5" cy="8.5" r="7.6" fill="none" stroke="#2a76b4" stroke-width="1.15"/><circle cx="8.6" cy="4.9" r="0.8" fill="#2a76b4"/><path d="M7.6 7.4h.9l.4 3.6c.1 .9 .5 1.3 1.2 1.5" fill="none" stroke="#2a76b4" stroke-width="1.1"/></svg>
<div class="t" style="left:254.50px;top:825.05px;font-size:12.7px;color:#0e0e0e">005</div>
<div class="t" style="left:334.20px;top:825.05px;font-size:12.7px;color:#0e0e0e">Dodavatel - školení 7</div>
<div class="t" style="left:684.50px;top:825.05px;font-size:12.7px;color:#0e0e0e">12345678</div>
<div class="t" style="left:784.50px;top:825.05px;font-size:12.7px;color:#0e0e0e">22. 5. 2025 8:44</div>
<div class="t" style="left:934.10px;top:825.15px;font-size:12.58px;color:#0e0e0e">Otevírání zahájeno</div>
<svg style="left:1142.5px;top:824.5px" width="8" height="8" viewBox="0 0 8 8"><path d="M0.8 0.8L7.2 7.2M7.2 0.8L0.8 7.2" stroke="#d0262d" stroke-width="1.8"/></svg>
<svg style="left:1282.3px;top:824.5px" width="8" height="8" viewBox="0 0 8 8"><path d="M0.8 0.8L7.2 7.2M7.2 0.8L0.8 7.2" stroke="#d0262d" stroke-width="1.8"/></svg>
<div class="a" style="left:180px;top:842px;width:1222px;height:1px;background:#e3e3e3"></div>
<div class="a" style="left:1349px;top:693px;width:53px;height:149px;background:linear-gradient(to right,rgba(0,0,0,0),rgba(0,0,0,.075) 94%,rgba(0,0,0,.11))"></div>
<div class="a" style="left:1349px;top:655px;width:53px;height:37px;background:linear-gradient(to right,rgba(0,0,0,0),rgba(0,0,0,.06) 94%,rgba(0,0,0,.10))"></div>
<div class="a" style="left:180px;top:843px;width:1222px;height:12px;background:#f1f1f1"></div>
<div class="a" style="left:182px;top:845px;width:1097px;height:8px;background:#c1c1c1;border-radius:4px"></div>
<div class="a" style="left:177px;top:610px;width:1228px;height:248px;border:3px solid #dcdde0;border-radius:10px"></div>
<div class="a" style="left:1581px;top:404px;width:3px;height:448px;background:#c3c3c3;border-radius:1.5px"></div>
<div class="a" style="left:1581px;top:852px;width:2px;height:29px;background:#fff"></div>
</body></html>
